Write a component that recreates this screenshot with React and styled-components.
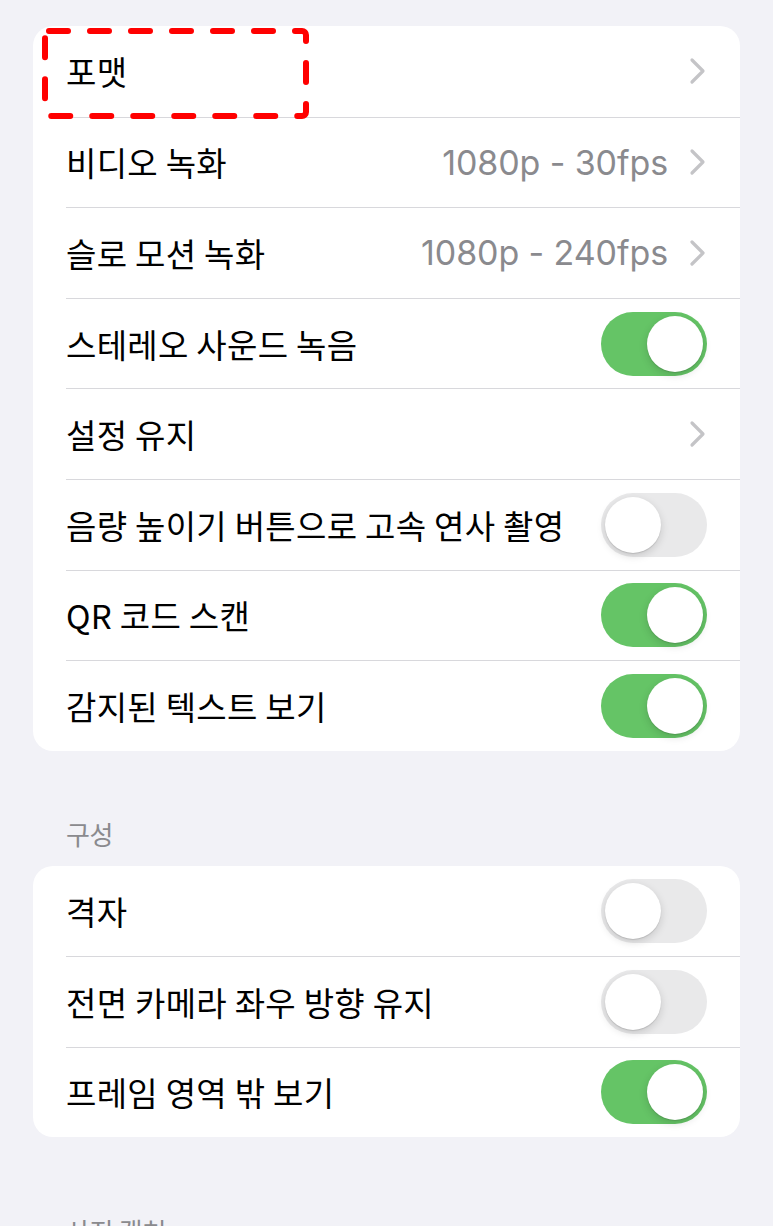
import React from 'react';
import styled, { createGlobalStyle } from 'styled-components';

const GlobalStyle = createGlobalStyle`
  html, body {
    margin: 0;
    padding: 0;
    background: #f2f2f7;
  }
  body {
    font-family: Inter, 'Noto Sans CJK KR', sans-serif;
    -webkit-font-smoothing: antialiased;
  }
`;

const Page = styled.div`
  width: 773px;
  height: 1226px;
  overflow: hidden;
  background: #f2f2f7;
  padding: 26px 33px 0;
  box-sizing: border-box;
  display: flex;
  flex-direction: column;
`;

const Group = styled.div`
  position: relative;
  background: #ffffff;
  border-radius: 20px;
  flex-shrink: 0;
`;

const SectionTitle = styled.div`
  margin: ${p => p.$top}px 0 0 33px;
  height: 44px;
  flex-shrink: 0;
  display: flex;
  align-items: flex-end;
  padding-bottom: 14px;
  font-family: 'Noto Sans CJK KR', sans-serif;
  font-size: 26px;
  color: #8a8a8e;
  letter-spacing: -0.3px;
`;

const Row = styled.div`
  height: ${p => p.$h}px;
  padding-left: 33px;
  display: flex;
`;

const RowInner = styled.div`
  flex: 1;
  display: flex;
  align-items: center;
  padding-right: 33px;
  border-top: ${p => (p.$first ? 'none' : '1px solid #d8d8dc')};
`;

const Label = styled.span`
  flex: 1;
  font-family: 'Noto Sans CJK KR', sans-serif;
  font-size: 33px;
  color: #000000;
  letter-spacing: 0.3px;
`;

const Value = styled.span`
  font-family: Inter, 'Noto Sans', sans-serif;
  font-size: 34px;
  color: #8a8a8e;
  margin-right: 21px;
  letter-spacing: -0.1px;
`;

const Switch = styled.div`
  position: relative;
  width: 106px;
  height: 64px;
  border-radius: 32px;
  background: ${p => (p.$on ? '#65c466' : '#e9e9ea')};
`;

const Knob = styled.div`
  position: absolute;
  top: 4px;
  left: ${p => (p.$on ? '46px' : '4px')};
  width: 56px;
  height: 56px;
  border-radius: 50%;
  background: #ffffff;
  box-shadow: 0 3px 8px rgba(0, 0, 0, 0.15), 0 1px 1px rgba(0, 0, 0, 0.12);
`;

const Highlight = styled.svg`
  position: absolute;
  left: 6px;
  top: 0px;
  pointer-events: none;
`;

const Chevron = () => (
  <svg width="18" height="28" viewBox="0 0 18 28">
    <path
      d="M3 3 L14 14 L3 25"
      fill="none"
      stroke="#c4c4c7"
      strokeWidth="3.2"
      strokeLinecap="round"
      strokeLinejoin="round"
    />
  </svg>
);

const Toggle = ({ on }) => (
  <Switch $on={on}>
    <Knob $on={on} />
  </Switch>
);

const mainRows = [
  { label: '포맷', chevron: true },
  { label: '비디오 녹화', value: '1080p - 30fps', chevron: true },
  { label: '슬로 모션 녹화', value: '1080p - 240fps', chevron: true },
  { label: '스테레오 사운드 녹음', toggle: true, on: true },
  { label: '설정 유지', chevron: true },
  { label: '음량 높이기 버튼으로 고속 연사 촬영', toggle: true, on: false },
  { label: 'QR 코드 스캔', toggle: true, on: true },
  { label: '감지된 텍스트 보기', toggle: true, on: true }
];

const compositionRows = [
  { label: '격자', toggle: true, on: false },
  { label: '전면 카메라 좌우 방향 유지', toggle: true, on: false },
  { label: '프레임 영역 밖 보기', toggle: true, on: true }
];

const renderRows = (rows, h) =>
  rows.map((row, i) => (
    <Row key={row.label} $h={h}>
      <RowInner $first={i === 0}>
        <Label>{row.label}</Label>
        {row.value && <Value>{row.value}</Value>}
        {row.chevron && <Chevron />}
        {row.toggle && <Toggle on={row.on} />}
      </RowInner>
    </Row>
  ));

const App = () => {
  return (
    <Page>
      <GlobalStyle />
      <Group>
        {renderRows(mainRows, 90.6)}
        <Highlight width="272" height="96" viewBox="0 0 272 96">
          <rect
            x="6"
            y="5"
            width="261"
            height="85"
            rx="4"
            fill="none"
            stroke="#ff0000"
            strokeWidth="6"
            strokeDasharray="19 22"
            strokeLinecap="round"
          />
        </Highlight>
      </Group>
      <SectionTitle $top={57}>구성</SectionTitle>
      <Group>{renderRows(compositionRows, 90.4)}</Group>
      <SectionTitle $top={68}>사진 캡처</SectionTitle>
    </Page>
  );
};

export default App;
